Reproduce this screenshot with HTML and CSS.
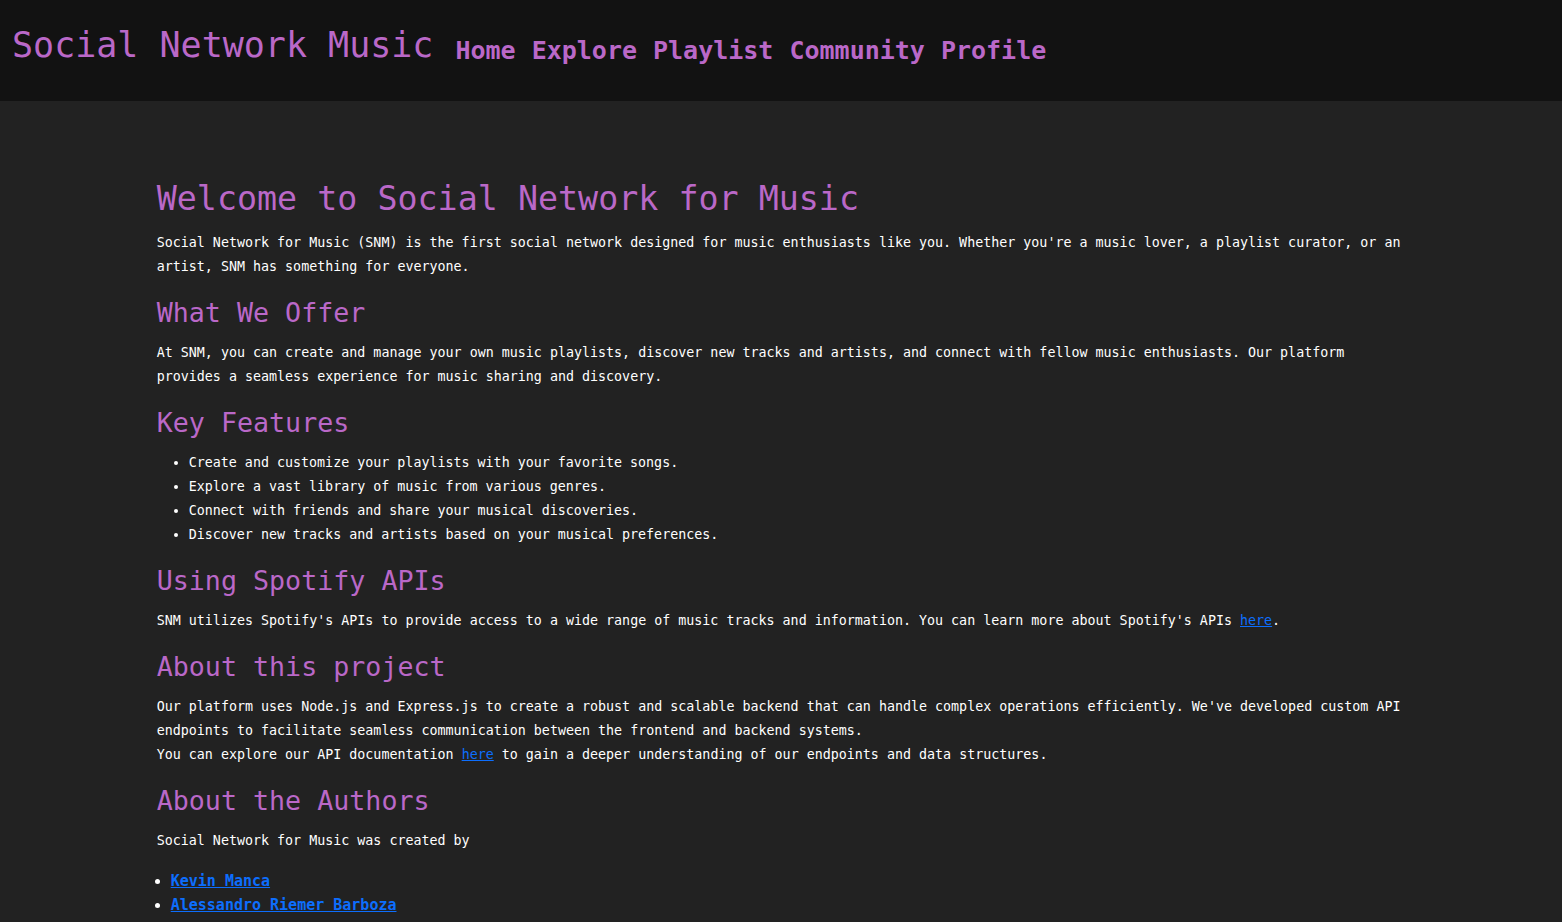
FILE: index.html
```html
<!DOCTYPE html>
<html lang="en">
<head>
<meta charset="utf-8">
<title>Social Network for Music</title>
<link rel="stylesheet" href="styles.css">
</head>
<body>
<header class="site-header">
  <h1 class="brand">Social Network Music</h1>
  <nav class="nav">
    <a href="#">Home</a>
    <a href="#">Explore</a>
    <a href="#">Playlist</a>
    <a href="#">Community</a>
    <a href="#">Profile</a>
  </nav>
</header>
<main class="content">
  <h1 class="title">Welcome to Social Network for Music</h1>
  <p>Social Network for Music (SNM) is the first social network designed for music enthusiasts like you. Whether you're a music lover, a playlist curator, or an artist, SNM has something for everyone.</p>

  <h2>What We Offer</h2>
  <p>At SNM, you can create and manage your own music playlists, discover new tracks and artists, and connect with fellow music enthusiasts. Our platform provides a seamless experience for music sharing and discovery.</p>

  <h2>Key Features</h2>
  <ul class="features">
    <li>Create and customize your playlists with your favorite songs.</li>
    <li>Explore a vast library of music from various genres.</li>
    <li>Connect with friends and share your musical discoveries.</li>
    <li>Discover new tracks and artists based on your musical preferences.</li>
  </ul>

  <h2>Using Spotify APIs</h2>
  <p>SNM utilizes Spotify's APIs to provide access to a wide range of music tracks and information. You can learn more about Spotify's APIs <a class="link" href="#">here</a>.</p>

  <h2>About this project</h2>
  <p>Our platform uses Node.js and Express.js to create a robust and scalable backend that can handle complex operations efficiently. We've developed custom API endpoints to facilitate seamless communication between the frontend and backend systems.<br>You can explore our API documentation <a class="link" href="#">here</a> to gain a deeper understanding of our endpoints and data structures.</p>

  <h2>About the Authors</h2>
  <p>Social Network for Music was created by</p>
  <ul class="authors">
    <li><a class="link author" href="#">Kevin Manca</a></li>
    <li><a class="link author" href="#">Alessandro Riemer Barboza</a></li>
  </ul>
</main>
</body>
</html>
```

FILE: styles.css
```css
html, body {
  margin: 0;
  padding: 0;
}

body {
  background: #222222;
  color: #ffffff;
  font-family: "DejaVu Sans Mono", "Liberation Mono", monospace;
  font-size: 13.33px;
  line-height: 24px;
}

.site-header {
  display: flex;
  align-items: flex-start;
  gap: 22px;
  background: #121212;
  padding: 24px 12px 35px;
}

.brand {
  margin: 0;
  font-size: 35px;
  line-height: 42px;
  font-weight: normal;
  color: #ba68c8;
}

.nav {
  display: flex;
  gap: 16px;
  margin-top: 12px;
}

.nav a {
  font-size: 25px;
  line-height: 30px;
  font-weight: bold;
  color: #ba68c8;
  text-decoration: none;
}

.content {
  width: 80%;
  margin: 0 auto;
  padding-top: 78px;
  padding-left: 1px;
}

.title {
  margin: 0 0 12px;
  font-size: 33.33px;
  line-height: 40px;
  font-weight: normal;
  color: #ba68c8;
}

h2 {
  margin: 18px 0 12px;
  font-size: 26.67px;
  line-height: 32px;
  font-weight: normal;
  color: #ba68c8;
}

p {
  margin: 0;
}

ul {
  margin: 0;
}

.features {
  padding-left: 32px;
}

.authors {
  margin-top: 16px;
  padding-left: 14px;
}

.authors li {
  font-size: 15px;
}

.link {
  color: #0d6efd;
  text-decoration: underline;
}

.author {
  font-size: 15px;
  font-weight: bold;
}
```
